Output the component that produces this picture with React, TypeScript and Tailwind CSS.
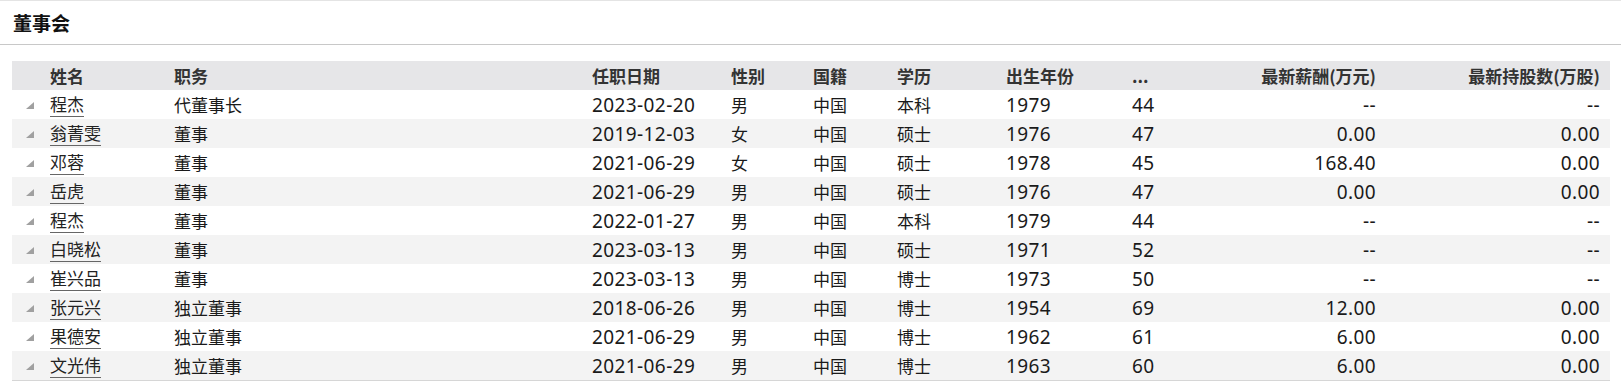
const rows = [
  ["程杰", "代董事长", "2023-02-20", "男", "中国", "本科", "1979", "44", "--", "--"],
  ["翁菁雯", "董事", "2019-12-03", "女", "中国", "硕士", "1976", "47", "0.00", "0.00"],
  ["邓蓉", "董事", "2021-06-29", "女", "中国", "硕士", "1978", "45", "168.40", "0.00"],
  ["岳虎", "董事", "2021-06-29", "男", "中国", "硕士", "1976", "47", "0.00", "0.00"],
  ["程杰", "董事", "2022-01-27", "男", "中国", "本科", "1979", "44", "--", "--"],
  ["白晓松", "董事", "2023-03-13", "男", "中国", "硕士", "1971", "52", "--", "--"],
  ["崔兴品", "董事", "2023-03-13", "男", "中国", "博士", "1973", "50", "--", "--"],
  ["张元兴", "独立董事", "2018-06-26", "男", "中国", "博士", "1954", "69", "12.00", "0.00"],
  ["果德安", "独立董事", "2021-06-29", "男", "中国", "博士", "1962", "61", "6.00", "0.00"],
  ["文光伟", "独立董事", "2021-06-29", "男", "中国", "博士", "1963", "60", "6.00", "0.00"],
];

const grid =
  "grid grid-cols-[38px_124px_418px_139px_82px_84px_109px_126px_120px_124px_224px] pr-[10px] items-center h-[29px]";

// numbers use a latin face closer to the original's digit widths
const num = "font-['Noto_Sans',sans-serif] text-[19px] tracking-[0.4px] leading-[24px]";

const Corner = () => (
  <svg width="8" height="7" viewBox="0 0 8 7" className="ml-[14px] mt-[2px]">
    <polygon points="8,0 8,7 0,7" fill="#a0a0a0" />
  </svg>
);

export default function App() {
  return (
    <div className="w-[1621px] h-[392px] bg-white font-['Noto_Sans_CJK_SC',sans-serif] text-[17px] text-[#1a1a1a]">
      <div className="h-[45px] border-t border-b border-t-[#e4e4e4] border-b-[#c8c8c8] flex items-center pl-[13px]">
        <span className="text-[19px] font-bold text-[#111] leading-none">董事会</span>
      </div>
      <div className="mt-[16px] ml-[12px] w-[1598px] border-b border-[#d6d6d6]">
        <div className={`${grid} bg-[#e6e6e8] font-bold text-[#333]`}>
          <div />
          <div>姓名</div>
          <div>职务</div>
          <div>任职日期</div>
          <div>性别</div>
          <div>国籍</div>
          <div>学历</div>
          <div>出生年份</div>
          <div>...</div>
          <div className="text-right">最新薪酬(万元)</div>
          <div className="text-right">最新持股数(万股)</div>
        </div>
        {rows.map((r, i) => (
          <div key={i} className={`${grid} ${i % 2 === 1 ? "bg-[#f3f3f3]" : "bg-white"}`}>
            <Corner />
            <div className="flex">
              <span className="leading-[24px] border-b border-[#666] text-[#222]">{r[0]}</span>
            </div>
            <div>{r[1]}</div>
            <div className={num}>{r[2]}</div>
            <div>{r[3]}</div>
            <div>{r[4]}</div>
            <div>{r[5]}</div>
            <div className={num}>{r[6]}</div>
            <div className={num}>{r[7]}</div>
            <div className={`${num} text-right`}>{r[8]}</div>
            <div className={`${num} text-right`}>{r[9]}</div>
          </div>
        ))}
      </div>
    </div>
  );
}
